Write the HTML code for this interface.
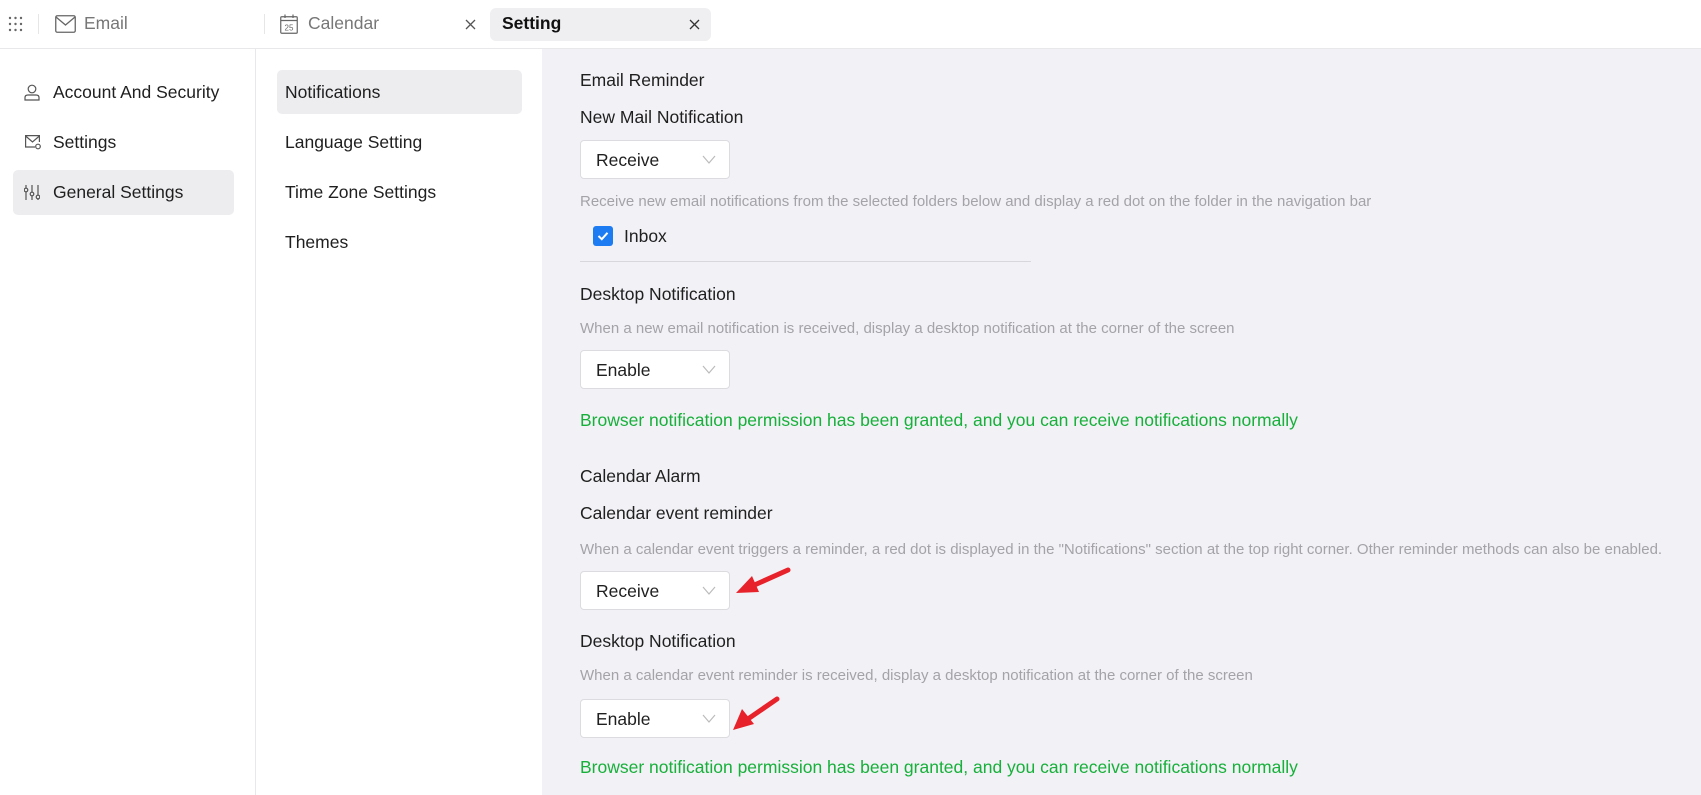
<!DOCTYPE html>
<html><head><meta charset="utf-8">
<style>
*{margin:0;padding:0;box-sizing:border-box}
body{width:1701px;height:795px;overflow:hidden;background:#fff;font-family:"Liberation Sans",Arial,sans-serif;color:#1f1f1f;position:relative}
.a{position:absolute;white-space:nowrap}
.t17{font-size:17.5px;line-height:20px}
.gray{color:#a3a3a8;font-size:15px;line-height:18px}
.green{color:#17b03a;font-size:17.5px;line-height:20px}
.sel{position:absolute;width:150px;height:39px;background:#fff;border:1px solid #dcdce0;border-radius:4px}
.sel span{position:absolute;left:15px;top:9px;font-size:17.5px;line-height:20px}
.sel svg{position:absolute;right:13px;top:14px}
</style></head><body>
<div class="a" style="left:0;top:0;width:1701px;height:49px;border-bottom:1px solid #e8e8ea;background:#fff"></div>
<svg class="a" style="left:8px;top:16px" width="16" height="16"><g fill="#666"><circle cx="2" cy="2" r="1.2"/><circle cx="7.5" cy="2" r="1.2"/><circle cx="13" cy="2" r="1.2"/><circle cx="2" cy="8" r="1.2"/><circle cx="7.5" cy="8" r="1.2"/><circle cx="13" cy="8" r="1.2"/><circle cx="2" cy="14" r="1.2"/><circle cx="7.5" cy="14" r="1.2"/><circle cx="13" cy="14" r="1.2"/></g></svg>
<div class="a" style="left:38px;top:14px;width:1px;height:20px;background:#e6e6e6"></div>
<svg class="a" style="left:55px;top:15px" width="21" height="18"><rect x="0.75" y="0.75" width="19.5" height="16.5" rx="1.5" fill="none" stroke="#666" stroke-width="1.3"/><path d="M1 2 L10.5 10 L20 2" fill="none" stroke="#666" stroke-width="1.3"/></svg>
<div class="a" style="left:84px;top:13px;font-size:17.5px;line-height:20px;color:#777">Email</div>
<div class="a" style="left:264px;top:14px;width:1px;height:20px;background:#e6e6e6"></div>
<svg class="a" style="left:280px;top:14px" width="18" height="20"><rect x="0.75" y="2.75" width="16.5" height="16.5" rx="1" fill="none" stroke="#666" stroke-width="1.2"/><path d="M0.75 6.5H17.25M5 0.5V4M13 0.5V4" stroke="#666" stroke-width="1.2"/><text x="9" y="16.5" font-size="8" text-anchor="middle" fill="#666" font-family="Liberation Sans">25</text></svg>
<div class="a" style="left:308px;top:13px;font-size:17.5px;line-height:20px;color:#777">Calendar</div>
<svg class="a" style="left:465px;top:19px" width="11" height="11"><path d="M1 1L10 10M10 1L1 10" stroke="#555" stroke-width="1.3"/></svg>
<div class="a" style="left:490px;top:8px;width:221px;height:33px;background:#efeff2;border-radius:6px"></div>
<div class="a" style="left:502px;top:13px;font-size:17.5px;line-height:20px;font-weight:bold;color:#111">Setting</div>
<svg class="a" style="left:689px;top:19px" width="11" height="11"><path d="M1 1L10 10M10 1L1 10" stroke="#333" stroke-width="1.3"/></svg>

<div class="a" style="left:255px;top:49px;width:1px;height:746px;background:#e8e8ea"></div>
<div class="a" style="left:13px;top:170px;width:221px;height:45px;background:#ededf0;border-radius:5px"></div>
<svg class="a" style="left:24px;top:84px" width="16" height="17"><circle cx="8" cy="5" r="3.8" fill="none" stroke="#555" stroke-width="1.2"/><path d="M1 16 V13.5 Q1 11 4 11 H12 Q15 11 15 13.5 V16 Z" fill="none" stroke="#555" stroke-width="1.2"/></svg>
<div class="a t17" style="left:53px;top:82px">Account And Security</div>
<svg class="a" style="left:24px;top:134px" width="18" height="16"><path d="M11 13H1.6V1.6H15.4V8" fill="none" stroke="#555" stroke-width="1.2"/><path d="M1.6 2L8.5 8L15.4 2" fill="none" stroke="#555" stroke-width="1.2"/><circle cx="14" cy="12.5" r="2.3" fill="none" stroke="#555" stroke-width="1.2"/></svg>
<div class="a t17" style="left:53px;top:132px">Settings</div>
<svg class="a" style="left:24px;top:184px" width="16" height="17"><path d="M2 1V16M8 1V16M14 1V16" stroke="#555" stroke-width="1.2"/><circle cx="2" cy="6" r="1.8" fill="#ededf0" stroke="#555" stroke-width="1.2"/><circle cx="8" cy="10" r="1.8" fill="#ededf0" stroke="#555" stroke-width="1.2"/><circle cx="14" cy="13" r="1.8" fill="#ededf0" stroke="#555" stroke-width="1.2"/></svg>
<div class="a t17" style="left:53px;top:182px">General Settings</div>

<div class="a" style="left:542px;top:49px;width:1159px;height:746px;background:#f2f1f6"></div>
<div class="a" style="left:277px;top:70px;width:245px;height:44px;background:#ededf0;border-radius:5px"></div>
<div class="a t17" style="left:285px;top:82px">Notifications</div>
<div class="a t17" style="left:285px;top:132px">Language Setting</div>
<div class="a t17" style="left:285px;top:182px">Time Zone Settings</div>
<div class="a t17" style="left:285px;top:232px">Themes</div>

<div class="a t17" style="left:580px;top:70px">Email Reminder</div>
<div class="a t17" style="left:580px;top:107px">New Mail Notification</div>
<div class="sel" style="left:580px;top:140px"><span>Receive</span><svg width="14" height="9"><path d="M1 1L7 8L13 1" fill="none" stroke="#bbb" stroke-width="1.2"/></svg></div>
<div class="a gray" style="left:580px;top:193px">Receive new email notifications from the selected folders below and display a red dot on the folder in the navigation bar</div>
<div class="a" style="left:593px;top:226px;width:20px;height:20px;background:#1d7cf2;border-radius:3px"></div>
<svg class="a" style="left:596px;top:229px" width="14" height="14"><path d="M2.5 7L5.8 10.2L11.5 3.8" fill="none" stroke="#fff" stroke-width="2"/></svg>
<div class="a t17" style="left:624px;top:226px">Inbox</div>
<div class="a" style="left:580px;top:261px;width:451px;height:1px;background:#d8d8dc"></div>
<div class="a t17" style="left:580px;top:284px">Desktop Notification</div>
<div class="a gray" style="left:580px;top:320px">When a new email notification is received, display a desktop notification at the corner of the screen</div>
<div class="sel" style="left:580px;top:350px"><span>Enable</span><svg width="14" height="9"><path d="M1 1L7 8L13 1" fill="none" stroke="#bbb" stroke-width="1.2"/></svg></div>
<div class="a green" style="left:580px;top:410px">Browser notification permission has been granted, and you can receive notifications normally</div>
<div class="a t17" style="left:580px;top:466px">Calendar Alarm</div>
<div class="a t17" style="left:580px;top:503px">Calendar event reminder</div>
<div class="a gray" style="left:580px;top:541px">When a calendar event triggers a reminder, a red dot is displayed in the "Notifications" section at the top right corner. Other reminder methods can also be enabled.</div>
<div class="sel" style="left:580px;top:571px"><span>Receive</span><svg width="14" height="9"><path d="M1 1L7 8L13 1" fill="none" stroke="#bbb" stroke-width="1.2"/></svg></div>
<div class="a t17" style="left:580px;top:631px">Desktop Notification</div>
<div class="a gray" style="left:580px;top:667px">When a calendar event reminder is received, display a desktop notification at the corner of the screen</div>
<div class="sel" style="left:580px;top:699px"><span>Enable</span><svg width="14" height="9"><path d="M1 1L7 8L13 1" fill="none" stroke="#bbb" stroke-width="1.2"/></svg></div>
<div class="a green" style="left:580px;top:757px">Browser notification permission has been granted, and you can receive notifications normally</div>

<svg class="a" style="left:730px;top:560px" width="70" height="45"><path d="M58 10 L20 27" stroke="#e8222a" stroke-width="5" stroke-linecap="round"/><path d="M6 33 L22 16 L29 32 Z" fill="#e8222a"/></svg>
<svg class="a" style="left:725px;top:690px" width="70" height="50"><path d="M52 9 L20 31" stroke="#e8222a" stroke-width="5" stroke-linecap="round"/><path d="M8 40 L17 19 L29 34 Z" fill="#e8222a"/></svg>
</body></html>
